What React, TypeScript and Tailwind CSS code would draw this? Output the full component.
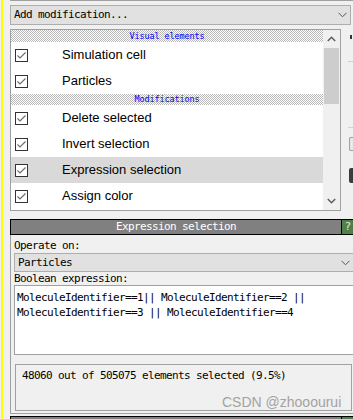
import React from "react";

const mono = "font-['DejaVu_Sans_Mono',monospace] text-[11px] leading-[12px] tracking-[-0.62px] text-black whitespace-pre";
const small = "font-['DejaVu_Sans_Mono',monospace] text-[8.5px] leading-[11px] tracking-[-0.12px] text-[#0000ff] whitespace-pre";
const sans = "font-['Liberation_Sans',Arial,sans-serif] text-[13px] text-black";

function Chevron({ className = "" }: { className?: string }) {
  return (
    <svg width="9" height="6" viewBox="0 0 9 6" className={className}>
      <polyline points="0.5,0.8 4.5,4.8 8.5,0.8" fill="none" stroke="#555" strokeWidth="1" />
    </svg>
  );
}

function Check() {
  return (
    <div className="flex h-[13px] w-[13px] shrink-0 items-center justify-center border border-[#333] bg-white">
      <svg width="11" height="11" viewBox="0 0 11 11">
        <polyline points="1.5,5.5 4,8 9.5,2.5" fill="none" stroke="#6e6e6e" strokeWidth="1.2" />
      </svg>
    </div>
  );
}

function Strip({ label, tall = false }: { label: string; tall?: boolean }) {
  return (
    <div className={`flex ${tall ? "h-[12px]" : "h-[11px]"} shrink-0 items-center justify-center [background-image:repeating-conic-gradient(#b8b8b8_0_25%,#ffffff_0_50%)] [background-size:2px_2px]`}>
      <span className={small}>{label}</span>
    </div>
  );
}

function Row({ label, selected = false }: { label: string; selected?: boolean }) {
  return (
    <div className={`flex h-[26px] shrink-0 items-center pl-[4px] ${selected ? "bg-[#d9d9d9]" : ""}`}>
      <Check />
      <span className={`ml-[34px] ${sans}`}>{label}</span>
    </div>
  );
}

export default function App() {
  return (
    <div className="relative flex h-[419px] w-[353px] overflow-hidden bg-[#f0f0f0]">
      <div className="ml-px h-full w-[2px] shrink-0 bg-[#ffff00]" />
      <div className="ml-[7px] flex w-[343px] shrink-0 flex-col *:shrink-0">
        <div className="h-px bg-[#a0a0a0]" />
        {/* Add modification dropdown */}
        <div className="mr-[2px] mt-[4px] flex h-[20px] items-center border border-[#adadad] bg-[#e1e1e1] pl-[3px] pr-[3px]">
          <span className={mono}>Add modification...</span>
          <Chevron className="ml-auto" />
        </div>
        {/* list area */}
        <div className="mt-[4px] flex">
          <div className="flex h-[182px] w-[331px] shrink-0 border border-[#a0a0a0] bg-white">
            <div className="flex w-[312px] flex-col overflow-hidden">
              <Strip label="Visual elements" tall />
              <Row label="Simulation cell" />
              <Row label="Particles" />
              <Strip label="Modifications" />
              <Row label="Delete selected" />
              <Row label="Invert selection" />
              <Row label="Expression selection" selected />
              <Row label="Assign color" />
            </div>
            <div className="flex w-[17px] flex-col bg-[#f0f0f0]">
              <div className="flex h-[18px] shrink-0 items-center justify-center">
                <svg width="9" height="6" viewBox="0 0 9 6">
                  <polyline points="0.8,5 4.5,1.3 8.2,5" fill="none" stroke="#606060" strokeWidth="1.6" />
                </svg>
              </div>
              <div className="ml-px mr-px h-[56px] shrink-0 bg-[#cdcdcd]" />
              <div className="mt-auto flex h-[18px] shrink-0 items-center justify-center">
                <svg width="9" height="6" viewBox="0 0 9 6">
                  <polyline points="0.8,1 4.5,4.7 8.2,1" fill="none" stroke="#606060" strokeWidth="1.6" />
                </svg>
              </div>
            </div>
          </div>
          <div className="flex flex-1 flex-col">
            <div className="ml-[9px] mt-[6px] h-[4px] w-[2px] bg-[#333]" />
            <div className="ml-[7px] mt-[22px] h-px bg-[#d0d0d0]" />
            <div className="ml-[7px] mt-[65px] h-px bg-[#d0d0d0]" />
            <div className="ml-[8px] mt-[9px] h-[14px] rounded-l-[2px] border border-r-0 border-[#a0a0a0] bg-[#e8e8e8]" />
            <div className="ml-[8px] mt-[17px] h-[15px] rounded-l-[2px] bg-[#3c3c3c]" />
          </div>
        </div>
        {/* header */}
        <div className="mt-[8px] flex h-[16px] border-y border-black">
          <div className="flex w-[332px] shrink-0 items-center justify-center border-l border-r border-black bg-[#808080]">
            <span className={`${mono} !text-white`}>Expression selection</span>
          </div>
          <div className="flex flex-1 items-center justify-center bg-[#4f8048]">
            <span className={`${mono} !text-[#e8e8e8]`}>?</span>
          </div>
        </div>
        {/* panel */}
        <div className="flex flex-col border-b border-l border-[#a0a0a0] pl-[3px] *:shrink-0">
          <div className={`mt-[5px] h-[12px] ${mono}`}>Operate on:</div>
          <div className="-mr-[4px] mt-[1px] flex h-[19px] items-center border border-[#adadad] bg-[#e1e1e1] pl-[3px] pr-[6px]">
            <span className={mono}>Particles</span>
            <Chevron className="ml-auto" />
          </div>
          <div className={`mt-[1px] h-[12px] ${mono}`}>Boolean expression:</div>
          <div className="-mr-[4px] flex h-[70px] flex-col border border-[#a0a0a0] bg-white pl-[2px] pt-[4px]">
            <div className={`h-[15px] ${mono} leading-[15px]`}>MoleculeIdentifier==1|| MoleculeIdentifier==2 ||</div>
            <div className={`h-[15px] ${mono} leading-[15px]`}>MoleculeIdentifier==3 || MoleculeIdentifier==4</div>
          </div>
          <div className="ml-px mr-px mt-[9px] h-[47px] border border-[#a0a0a0] pl-[6px] pt-[5px]">
            <div className={mono}>48060 out of 505075 elements selected (9.5%)</div>
          </div>
          <div className="h-[2px]" />
        </div>
        {/* bottom header */}
        <div className="mt-[2px] flex h-[8px] border-t border-black">
          <div className="flex w-[332px] shrink-0 justify-center border-l border-r border-black bg-[#808080] pt-px">
            <span className={`${mono} !text-white`}>Modifier templates</span>
          </div>
          <div className="flex-1 bg-[#4f8048]" />
        </div>
      </div>
      <div className="absolute left-[222px] top-[394px] font-['Liberation_Sans',Arial,sans-serif] text-[14px] leading-[16px] text-[#9a9a9a] opacity-90">
        CSDN @zhooourui
      </div>
    </div>
  );
}
